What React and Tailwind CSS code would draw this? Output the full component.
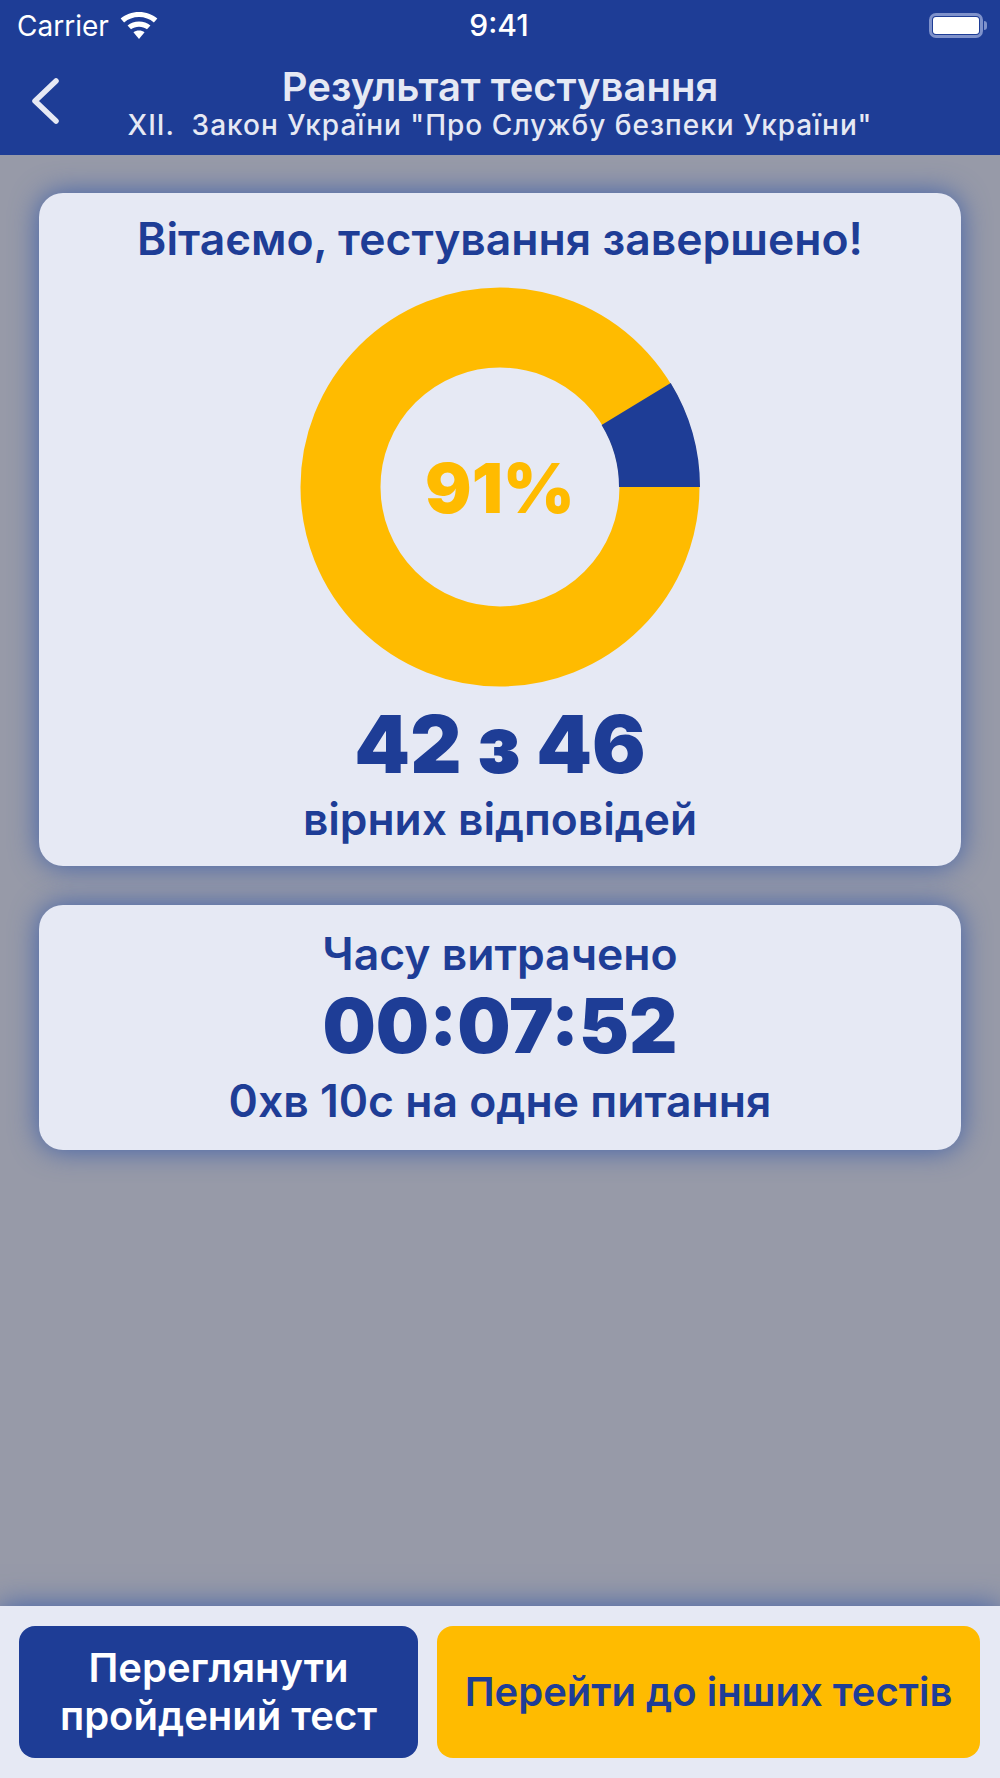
import React from "react";

function WifiIcon() {
  return (
    <svg width="40" height="29" viewBox="0 0 36 28" preserveAspectRatio="none" fill="#fff">
      <path d="M18 1C11.5 1 6 3.4 1.5 7.3L4.6 11C8.3 7.8 12.9 5.9 18 5.9s9.7 1.9 13.4 5.1l3.1-3.7C30 3.4 24.5 1 18 1z" />
      <path d="M18 10.2c-3.9 0-7.5 1.4-10.3 3.8l3.1 3.7c2-1.6 4.5-2.6 7.2-2.6s5.200 1 7.2 2.6l3.1-3.700C25.500 11.600 21.900 10.200 18 10.200z" />
      <path d="M18 18.800c-1.900 0-3.600.6-5 1.700L18 27l5-6.500c-1.400-1.100-3.100-1.700-5-1.700z" />
    </svg>
  );
}

function BatteryIcon() {
  return (
    <div className="flex items-center gap-[1px]">
      <div className="w-[54px] h-[25px] rounded-[7px] border-[3px] border-[#7f92cb] p-[1px]">
        <div className="w-full h-full rounded-[3px] bg-white" />
      </div>
      <div className="w-[3px] h-[9px] rounded-r-sm bg-[#7f92cb]" />
    </div>
  );
}

function Donut() {
  return (
    <div className="relative w-[400px] h-[400px]">
      <svg width="400" height="400" viewBox="0 0 400 400">
        <circle cx="200" cy="200" r="159.500" fill="none" stroke="#ffbb00" strokeWidth="80" />
        <path d="M400 200A200 200 0 0 0 370.700 95.900L301.600 138.100A119 119 0 0 1 319 200Z" fill="#1e3d96" />
      </svg>
      <div className="absolute inset-0 pt-[3px] flex items-center justify-center text-[69px] font-black text-[#ffbb00]">
        91%
      </div>
    </div>
  );
}

export default function App() {
  return (
    <div className="w-[1000px] h-[1778px] flex flex-col bg-[#979aa8] font-['Inter',sans-serif] text-[#1e3d96]">
      <header className="h-[155px] bg-[#1e3d96] text-white shrink-0">
        <div className="h-[50px] flex items-center justify-between pl-[17px] pr-[13px] pt-[1px]">
          <div className="flex items-center gap-[10px] w-[200px]">
            <span className="text-[28px] font-normal">Carrier</span>
            <WifiIcon />
          </div>
          <span className="text-[30px] font-medium">9:41</span>
          <div className="w-[206px] flex justify-end">
            <BatteryIcon />
          </div>
        </div>
        <div className="relative h-[105px] flex flex-col items-center pt-[14px] text-[#e6e9f4]">
          <svg className="absolute left-[30px] top-[28px]" width="30" height="46" viewBox="0 0 30 46" fill="none">
            <path d="M26 3L5 23l21 20" stroke="#e6e9f4" strokeWidth="5.500" strokeLinecap="round" strokeLinejoin="round" />
          </svg>
          <div className="text-[40px] leading-[45px] font-semibold">Результат тестування</div>
          <div className="text-[28px] leading-[33px] font-medium tracking-[1px] whitespace-pre">XII.  Закон України "Про Службу безпеки України"</div>
        </div>
      </header>

      <main className="flex-1 px-[39px] pt-[38px] flex flex-col gap-[39px]">
        <section className="h-[673px] rounded-[24px] bg-[#e6e9f4] shadow-[0_0_28px_#3f5fa8] flex flex-col items-center pt-[21px]">
          <h1 className="text-[44.500px] leading-[50px] font-semibold">Вітаємо, тестування завершено!</h1>
          <div className="mt-[23px]">
            <Donut />
          </div>
          <div className="mt-[12px] text-[79.500px] leading-[90px] font-black">42 з 46</div>
          <div className="mt-[6px] text-[44.300px] leading-[48px] font-semibold">вірних відповідей</div>
        </section>

        <section className="h-[245px] rounded-[24px] bg-[#e6e9f4] shadow-[0_0_28px_#3f5fa8] flex flex-col items-center pt-[24px]">
          <div className="text-[44.500px] leading-[50px] font-semibold">Часу витрачено</div>
          <div className="mt-[2px] text-[75px] leading-[90px] font-black">00:07:52</div>
          <div className="mt-[6px] text-[44.500px] leading-[48px] font-semibold">0хв 10с на одне питання</div>
        </section>
      </main>

      <footer className="h-[172px] shrink-0 bg-[#e6e9f4] shadow-[0_0_28px_#3f5fa8] px-[19px] pt-[20px] flex gap-[19px]">
        <button className="w-[399px] h-[132px] rounded-[16px] bg-[#1e3d96] text-white text-[40px] leading-[48px] font-semibold">
          Переглянути
          <br />
          пройдений тест
        </button>
        <button className="w-[543px] h-[132px] rounded-[16px] bg-[#ffbb00] text-[#1e3d96] text-[40px] leading-[48px] font-semibold">
          Перейти до інших тестів
        </button>
      </footer>
    </div>
  );
}
